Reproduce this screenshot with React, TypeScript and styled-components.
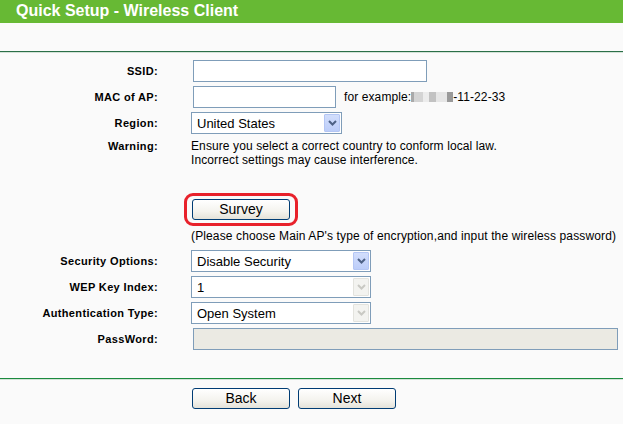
import React from "react";
import styled, { createGlobalStyle } from "styled-components";

const Global = createGlobalStyle`
  html, body { margin: 0; padding: 0; background: #fafafa; }
  body { font-family: "Liberation Sans", Arial, sans-serif; font-size: 12px; color: #000; }
`;

const Page = styled.div`
  width: 623px;
  height: 424px;
  background: #fafafa;
  overflow: hidden;
`;

const Header = styled.div`
  height: 23px;
  background: #67b934;
  color: #fff;
  font-weight: bold;
  font-size: 16px;
  line-height: 22px;
  padding-left: 16px;
`;

const Divider = styled.div<{ $color: string; $gap: number }>`
  margin-top: ${(p) => p.$gap}px;
  height: 1px;
  background: ${(p) => p.$color};
  border-bottom: 1px solid #d3e2d7;
`;

const Form = styled.div`
  padding-top: 5px;
`;

const Row = styled.div<{ $top?: boolean; $h?: number }>`
  display: grid;
  grid-template-columns: 158px 1fr;
  column-gap: 33px;
  min-height: ${(p) => p.$h ?? 26}px;
  align-items: ${(p) => (p.$top ? "start" : "center")};
`;

const Label = styled.div`
  text-align: right;
  font-weight: bold;
  font-size: 11px;
  letter-spacing: 0.35px;
`;

const Cell = styled.div`
  display: flex;
  align-items: center;
  gap: 8px;
`;

const TextInput = styled.input<{ $w: number; $disabled?: boolean }>`
  box-sizing: border-box;
  margin: 0 0 0 2px;
  width: ${(p) => p.$w}px;
  height: 22px;
  border: 1px solid #7f9db9;
  background: ${(p) => (p.$disabled ? "#ebeae3" : "#fff")};
  padding: 0 3px;
  font-family: "Liberation Sans", Arial, sans-serif;
  font-size: 13px;
  outline: none;
`;

const Example = styled.span`
  display: inline-flex;
  align-items: center;
  font-size: 12px;
  letter-spacing: 0.1px;
`;

const Blur = styled.span<{ $c: string; $w: number }>`
  display: inline-block;
  width: ${(p) => p.$w}px;
  height: 10px;
  background: ${(p) => p.$c};
`;

const SelectBox = styled.div<{ $w: number }>`
  box-sizing: border-box;
  width: ${(p) => p.$w}px;
  height: 22px;
  border: 1px solid #7f9db9;
  background: #fff;
  display: flex;
  align-items: center;
  justify-content: space-between;
  padding: 1px 1px 1px 5px;
  font-size: 13px;
`;

const ArrowBox = styled.span<{ $disabled?: boolean }>`
  box-sizing: border-box;
  width: 16px;
  height: 18px;
  border: 1px solid ${(p) => (p.$disabled ? "#e3e3de" : "#b4c6f4")};
  border-radius: 1px;
  background: ${(p) =>
    p.$disabled
      ? "#f3f3f0"
      : "linear-gradient(180deg, #d2defc 0%, #bccdf9 100%)"};
  display: flex;
  align-items: center;
  justify-content: center;
`;

const Warning = styled.div`
  line-height: 14px;
  font-size: 12px;
  padding-top: 3px;
  letter-spacing: 0.1px;
`;

const WarnLabel = styled(Label)`
  line-height: 14px;
  padding-top: 3px;
`;

const Outline = styled.div`
  margin-left: -7px;
  width: fit-content;
  border: 3px solid #e8212b;
  border-radius: 9px;
  padding: 3px 5px;
  margin-top: 26px;
`;

const Btn = styled.button`
  box-sizing: border-box;
  width: 98px;
  height: 21px;
  border: 1px solid #003c74;
  border-radius: 3px;
  background: linear-gradient(180deg, #ffffff 0%, #f4f3ee 60%, #e4e2d9 100%);
  font-family: "Liberation Sans", Arial, sans-serif;
  font-size: 14px;
  color: #000;
  padding: 0;
  line-height: 19px;
`;

const Note = styled.div`
  margin-top: 3px;
  line-height: 14px;
  font-size: 12px;
  letter-spacing: 0.13px;
  white-space: nowrap;
`;

const Section = styled.div`
  margin-top: 5px;
`;

const Footer = styled.div`
  display: flex;
  gap: 8px;
  padding-left: 192px;
  margin-top: 8px;
`;

const Chevron = ({ disabled }: { disabled?: boolean }) => (
  <svg width="9" height="6" viewBox="0 0 9 6">
    <path
      d="M1 1 L4.5 4.5 L8 1"
      fill="none"
      stroke={disabled ? "#c9c9c4" : "#4d6185"}
      strokeWidth="2"
    />
  </svg>
);

const Select = ({ w, value, disabled }: { w: number; value: string; disabled?: boolean }) => (
  <SelectBox $w={w}>
    <span>{value}</span>
    <ArrowBox $disabled={disabled}>
      <Chevron disabled={disabled} />
    </ArrowBox>
  </SelectBox>
);

const blurs = [
  { c: "#a9a9a9", w: 3 },
  { c: "#d4d4d4", w: 9 },
  { c: "#ececec", w: 6 },
  { c: "#c2c2c2", w: 7 },
  { c: "#e6e6e6", w: 11 },
  { c: "#9a9a9a", w: 6 },
];

export default function App() {
  return (
    <Page>
      <Global />
      <Header>Quick Setup - Wireless Client</Header>
      <Divider $color="#2b6f48" $gap={28} />
      <Form>
        <Row>
          <Label>SSID:</Label>
          <Cell>
            <TextInput $w={234} />
          </Cell>
        </Row>
        <Row>
          <Label>MAC of AP:</Label>
          <Cell>
            <TextInput $w={143} />
            <Example>
              for example:
              {blurs.map((b, i) => (
                <Blur key={i} $c={b.c} $w={b.w} />
              ))}
              -11-22-33
            </Example>
          </Cell>
        </Row>
        <Row>
          <Label>Region:</Label>
          <Cell>
            <Select w={151} value="United States" />
          </Cell>
        </Row>
        <Row $top>
          <WarnLabel>Warning:</WarnLabel>
          <Warning>
            Ensure you select a correct country to conform local law.
            <br />
            Incorrect settings may cause interference.
          </Warning>
        </Row>
        <Row $top>
          <div />
          <div>
            <Outline>
              <Btn>Survey</Btn>
            </Outline>
            <Note>
              (Please choose Main AP's type of encryption,and input the wireless password)
            </Note>
          </div>
        </Row>
        <Section>
          <Row>
            <Label>Security Options:</Label>
            <Cell>
              <Select w={180} value="Disable Security" />
            </Cell>
          </Row>
          <Row>
            <Label>WEP Key Index:</Label>
            <Cell>
              <Select w={180} value="1" disabled />
            </Cell>
          </Row>
          <Row>
            <Label>Authentication Type:</Label>
            <Cell>
              <Select w={180} value="Open System" disabled />
            </Cell>
          </Row>
          <Row>
            <Label>PassWord:</Label>
            <Cell>
              <TextInput $w={425} $disabled disabled />
            </Cell>
          </Row>
        </Section>
      </Form>
      <Divider $color="#1b8a3e" $gap={26} />
      <Footer>
        <Btn>Back</Btn>
        <Btn>Next</Btn>
      </Footer>
    </Page>
  );
}
